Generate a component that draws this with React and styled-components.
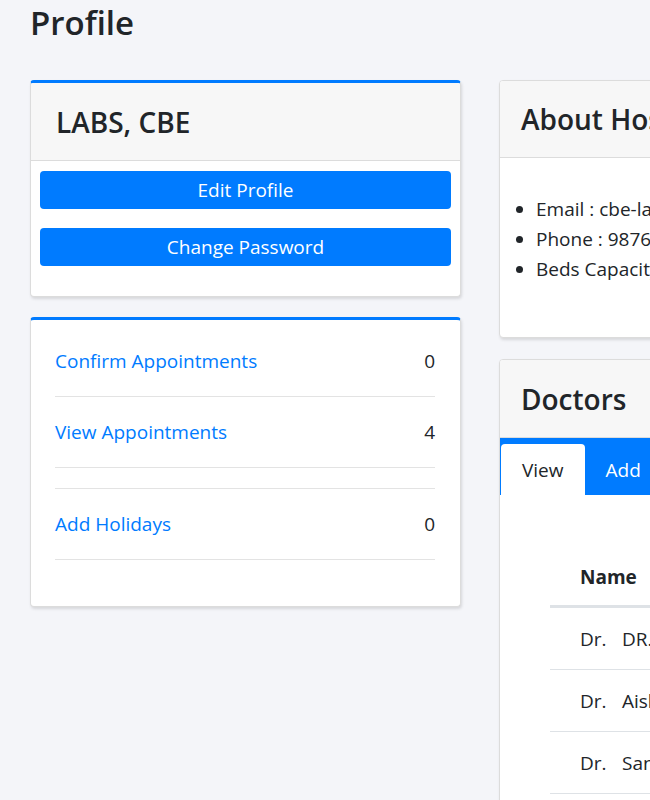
import React from "react";
import styled, { createGlobalStyle } from "styled-components";

const Global = createGlobalStyle`
  html, body { margin: 0; padding: 0; }
  body {
    background: #f4f5f9;
    font-family: "Open Sans", "Noto Sans", sans-serif;
    color: #212529;
    overflow: hidden;
  }
`;

const Page = styled.div`
  width: 1100px;
  padding: 0 0 0 30px;
`;

const Title = styled.h1`
  margin: 0;
  font-size: 33px;
  font-weight: 600;
  line-height: 46px;
  padding-bottom: 34px;
`;

const Row = styled.div`
  display: grid;
  grid-template-columns: 431px 600px;
  column-gap: 38px;
  align-items: start;
`;

const Column = styled.div`
  display: flex;
  flex-direction: column;
  gap: ${(p) => p.$gap || 20}px;
`;

const Card = styled.div`
  background: #fff;
  border: 1px solid #dcdcdc;
  border-top: ${(p) => (p.$accent ? "3px solid #007bff" : "1px solid #dcdcdc")};
  border-radius: 4px;
  box-shadow: 1px 2px 3px rgba(0, 0, 0, 0.12);
  overflow: hidden;
`;

const CardHeader = styled.div`
  background: #f7f7f7;
  border-bottom: 1px solid #dcdcdc;
  height: ${(p) => p.$h || 77}px;
  display: flex;
  align-items: center;
  padding: 0 21px 0 ${(p) => p.$pad || 25}px;
`;

const HeaderText = styled.h3`
  margin: 0;
  font-size: 28px;
  font-weight: 600;
  white-space: nowrap;
`;

const ButtonBody = styled.div`
  display: flex;
  flex-direction: column;
  gap: 19px;
  padding: 10px 9px 30px;
`;

const Button = styled.button`
  height: 38px;
  width: 100%;
  border: none;
  border-radius: 4px;
  background: #007bff;
  color: #fff;
  font-family: inherit;
  font-size: 19px;
  cursor: pointer;
`;

const LinkList = styled.ul`
  list-style: none;
  margin: 0;
  padding: 6px 25px 46px 24px;
`;

const LinkItem = styled.li`
  display: flex;
  justify-content: space-between;
  align-items: center;
  height: ${(p) => (p.$empty ? 20 : 70)}px;
  border-bottom: 1px solid #e3e3e3;
  font-size: 19px;
`;

const NavLink = styled.a`
  color: #007bff;
  text-decoration: none;
`;

const InfoList = styled.ul`
  margin: 0;
  padding: 36px 20px 53px 36px;
  font-size: 19px;
  line-height: 30px;
  white-space: nowrap;
`;

const TabBar = styled.div`
  background: #007bff;
  display: flex;
  align-items: flex-end;
  height: 57px;
  padding-left: 1px;
`;

const Tab = styled.div`
  height: 51px;
  padding: 0 21px;
  display: flex;
  align-items: center;
  font-size: 19px;
  border-radius: 4px 4px 0 0;
  background: ${(p) => (p.$active ? "#fff" : "transparent")};
  color: ${(p) => (p.$active ? "#212529" : "#fff")};
`;

const TableWrap = styled.div`
  padding: 54px 0 20px 50px;
`;

const Table = styled.table`
  border-collapse: collapse;
  width: 500px;
  font-size: 19px;
  text-align: left;
`;

const Th = styled.th`
  padding: 0 30px;
  height: 56px;
  vertical-align: middle;
  font-weight: 700;
  border-bottom: 3px solid #dee2e6;
`;

const Td = styled.td`
  padding: 0 30px;
  height: 61px;
  border-bottom: 1px solid #dee2e6;
  white-space: nowrap;
`;

const Prefix = styled.span`
  display: inline-block;
  width: 42px;
`;

const doctors = ["DR. Ramesh Kumar", "Aishwarya R", "Sanjay Menon"];

export default function App() {
  return (
    <Page>
      <Global />
      <Title>Profile</Title>
      <Row>
        <Column>
          <Card $accent>
            <CardHeader>
              <HeaderText>LABS, CBE</HeaderText>
            </CardHeader>
            <ButtonBody>
              <Button>Edit Profile</Button>
              <Button>Change Password</Button>
            </ButtonBody>
          </Card>
          <Card $accent>
            <LinkList>
              <LinkItem>
                <NavLink href="#">Confirm Appointments</NavLink>
                <span>0</span>
              </LinkItem>
              <LinkItem>
                <NavLink href="#">View Appointments</NavLink>
                <span>4</span>
              </LinkItem>
              <LinkItem $empty />
              <LinkItem>
                <NavLink href="#">Add Holidays</NavLink>
                <span>0</span>
              </LinkItem>
            </LinkList>
          </Card>
        </Column>
        <Column $gap={21}>
          <Card>
            <CardHeader $pad={21} $h={76}>
              <HeaderText>About Hospital</HeaderText>
            </CardHeader>
            <InfoList>
              <li>Email : cbe-labs@hospital.com</li>
              <li>Phone : 9876543210</li>
              <li>Beds Capacity : 120</li>
            </InfoList>
          </Card>
          <Card>
            <CardHeader $pad={21}>
              <HeaderText>Doctors</HeaderText>
            </CardHeader>
            <TabBar>
              <Tab $active>View</Tab>
              <Tab>Add</Tab>
            </TabBar>
            <TableWrap>
              <Table>
                <thead>
                  <tr>
                    <Th>Name</Th>
                  </tr>
                </thead>
                <tbody>
                  {doctors.map((d) => (
                    <tr key={d}>
                      <Td>
                        <Prefix>Dr.</Prefix>
                        {d}
                      </Td>
                    </tr>
                  ))}
                </tbody>
              </Table>
            </TableWrap>
          </Card>
        </Column>
      </Row>
    </Page>
  );
}
